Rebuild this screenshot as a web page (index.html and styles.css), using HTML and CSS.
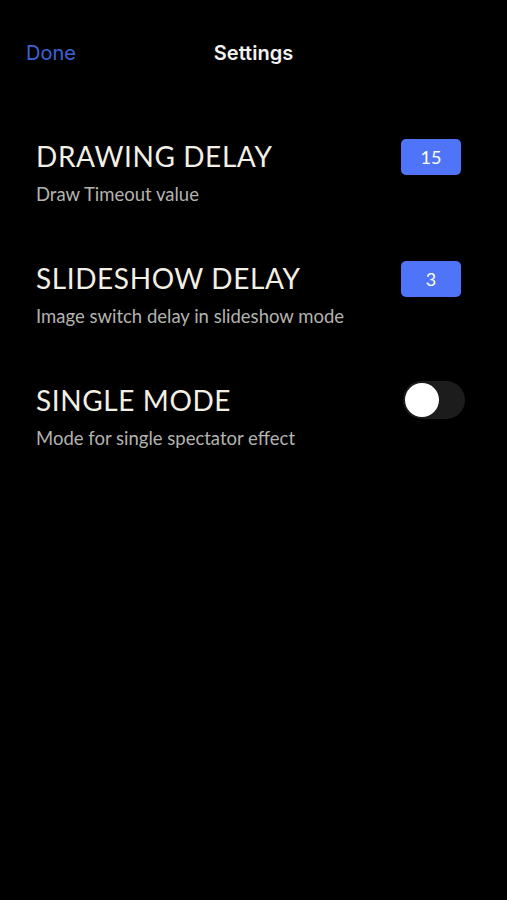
FILE: index.html
```html
<!DOCTYPE html>
<html lang="en">
<head>
    <meta charset="UTF-8">
    <meta name="viewport" content="width=device-width, initial-scale=1.0">
    <title>Settings</title>
    <link rel="stylesheet" href="styles.css">
</head>
<body>
    <div class="navbar">
        <a href="#" class="nav-done">Done</a>
        <h1 class="nav-title">Settings</h1>
    </div>

    <div class="settings">
        <div class="setting-row">
            <div class="setting-text">
                <h2>DRAWING DELAY</h2>
                <p>Draw Timeout value</p>
            </div>
            <span class="value-badge">15</span>
        </div>

        <div class="setting-row">
            <div class="setting-text">
                <h2>SLIDESHOW DELAY</h2>
                <p>Image switch delay in slideshow mode</p>
            </div>
            <span class="value-badge">3</span>
        </div>

        <div class="setting-row">
            <div class="setting-text">
                <h2>SINGLE MODE</h2>
                <p>Mode for single spectator effect</p>
            </div>
            <span class="toggle"><span class="toggle-knob"></span></span>
        </div>
    </div>
</body>
</html>
```

FILE: styles.css
```css
:root {
    --bg-color: #000;
    --title-color: #f2f0e4;
    --sub-color: #b3b3b0;
    --accent-color: #4f74f7;
    --link-color: #3c63d8;
}

body {
    margin: 0;
    padding: 0;
    background: var(--bg-color);
    font-family: Lato, "Open Sans", sans-serif;
    width: 507px;
    height: 900px;
}

.navbar {
    height: 104px;
    position: relative;
    display: flex;
    align-items: flex-start;
    justify-content: center;
    padding-top: 41px;
    box-sizing: border-box;
}

.nav-done {
    position: absolute;
    left: 26px;
    top: 41px;
    color: var(--link-color);
    text-decoration: none;
    font-family: Inter, "Liberation Sans", sans-serif;
    font-size: 20px;
    line-height: 24px;
}

.nav-title {
    margin: 0;
    color: #f2f2f2;
    font-family: Inter, "Liberation Sans", sans-serif;
    font-size: 20px;
    font-weight: 600;
    line-height: 24px;
}

.settings {
    padding: 34px 42px 0 36px;
}

.setting-row {
    display: flex;
    justify-content: space-between;
    align-items: flex-start;
    height: 122px;
}

.setting-text h2 {
    margin: 0;
    color: var(--title-color);
    font-size: 28px;
    font-weight: 400;
    line-height: 36px;
    letter-spacing: 0.6px;
}

.setting-text p {
    margin: 0;
    padding-top: 2px;
    color: var(--sub-color);
    font-size: 18.5px;
    line-height: 37px;
}

.value-badge {
    width: 60px;
    height: 36px;
    margin-top: 1px;
    margin-right: 4px;
    border-radius: 5px;
    background: var(--accent-color);
    color: #fff;
    font-size: 18px;
    display: flex;
    align-items: center;
    justify-content: center;
}

.toggle {
    width: 62px;
    height: 38px;
    margin-top: -1px;
    border-radius: 19px;
    background: #1c1c1c;
    display: flex;
    align-items: center;
    padding: 0 2px;
    box-sizing: border-box;
}

.toggle-knob {
    width: 34px;
    height: 34px;
    border-radius: 50%;
    background: #fff;
}
```
